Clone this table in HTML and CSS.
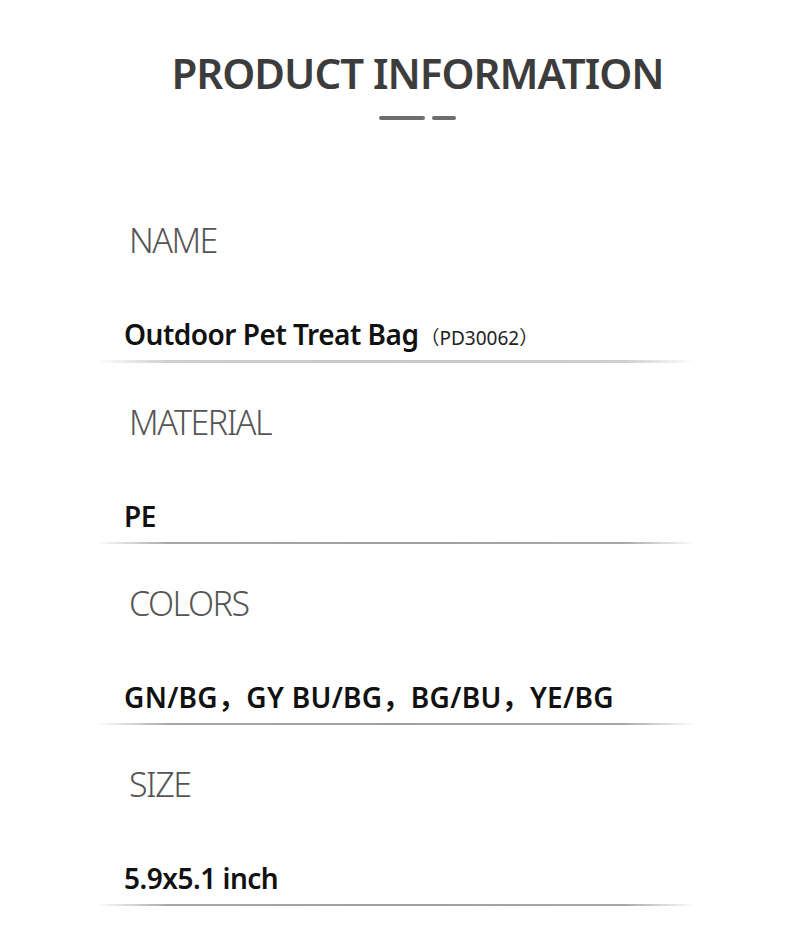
FILE: index.html
```html
<!DOCTYPE html>
<html>
<head>
<meta charset="utf-8">
<link rel="stylesheet" href="styles.css">
</head>
<body>
<div class="page">
  <header class="head">
    <h1 class="title">PRODUCT INFORMATION</h1>
    <div class="dashes"><span class="dash long"></span><span class="dash short"></span></div>
  </header>
  <section class="list">
    <div class="row">
      <div class="label">NAME</div>
      <div class="value">Outdoor Pet Treat Bag<span class="code">（PD30062）</span></div>
      <div class="rule soft"></div>
    </div>
    <div class="row">
      <div class="label">MATERIAL</div>
      <div class="value">PE</div>
      <div class="rule"></div>
    </div>
    <div class="row">
      <div class="label">COLORS</div>
      <div class="value wide">GN/BG，GY BU/BG，BG/BU，YE/BG</div>
      <div class="rule"></div>
    </div>
    <div class="row">
      <div class="label">SIZE</div>
      <div class="value">5.9x5.1 inch</div>
      <div class="rule"></div>
    </div>
  </section>
</div>
</body>
</html>
```
FILE: styles.css
```css
* { box-sizing: border-box; }
html, body { margin: 0; padding: 0; background: #fff; }
body { font-family: "Noto Sans", "Noto Sans CJK SC", sans-serif; }
.page { width: 790px; height: 937px; overflow: hidden; }
.head { padding-top: 46px; padding-left: 45px; text-align: center; }
.title {
  margin: 0;
  font-size: 42px;
  line-height: 54px;
  font-weight: 600;
  color: #3c3c3c;
  letter-spacing: -1px;
}
.dashes { display: flex; justify-content: center; gap: 7px; margin-top: 16px; }
.dash { display: block; height: 4px; border-radius: 2px; background: #6e6e6e; }
.dash.long { width: 46px; }
.dash.short { width: 24px; }
.list { margin: 0 95px 0 97px; padding-top: 61px; }
.label {
  margin-top: 39px;
  padding-left: 32px;
  height: 40px;
  line-height: 40px;
  font-size: 34px;
  font-weight: 300;
  color: #555;
  letter-spacing: -1.5px;
}
.value {
  margin-top: 56px;
  padding-left: 27px;
  height: 36px;
  line-height: 36px;
  font-size: 28px;
  font-weight: 600;
  color: #111;
  letter-spacing: -0.5px;
}
.value.wide { letter-spacing: 0.3px; }
.code { font-size: 19px; font-weight: 400; color: #222; letter-spacing: 0; margin-left: 2px; }
.rule {
  margin-top: 8px;
  height: 2px;
  background: linear-gradient(to right, rgba(150,150,150,0), #a8a8a8 12%, #a0a0a0 50%, #a8a8a8 88%, rgba(150,150,150,0));
}
.rule.soft {
  height: 3px;
  background: linear-gradient(to right, rgba(190,190,190,0), #cfcfcf 12%, #c8c8c8 50%, #cfcfcf 88%, rgba(190,190,190,0));
}
```
